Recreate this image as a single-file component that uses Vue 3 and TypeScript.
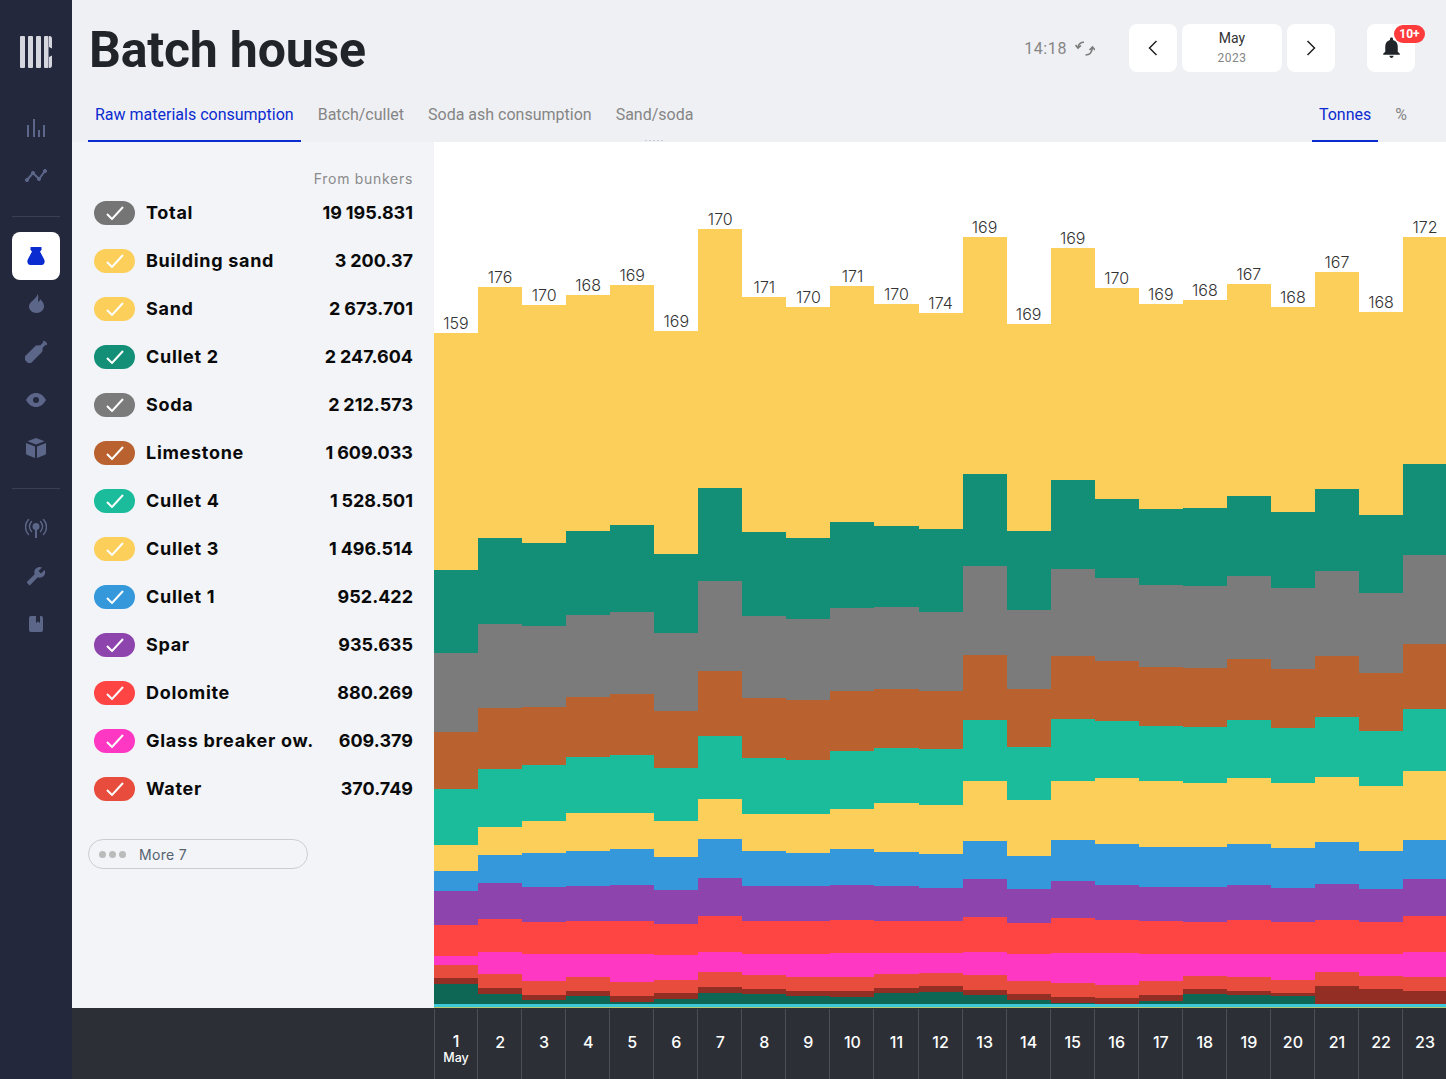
<script setup lang="ts">
interface Band { color: string; tops: number[] }
const bands: Band[] = [
  { color: '#fcce5a', tops: [333,287,305,295,285,331,229,297,307,286,304,313,237,324,248,288,304,300,284,307,272,312,237] },
  { color: '#148f77', tops: [570,538,543,531,525,554,488,532,538,522,526,529,474,531,480,499,509,508,496,512,489,515,464] },
  { color: '#7b7b7b', tops: [653,624,626,615,612,633,581,616,619,608,607,612,566,610,569,578,585,586,576,588,571,593,555] },
  { color: '#ba6130', tops: [732,708,707,697,694,711,671,698,700,691,689,691,655,689,656,661,667,668,659,669,656,673,644] },
  { color: '#1abc9c', tops: [789,769,765,757,755,768,736,758,760,751,748,749,720,747,719,721,726,727,720,728,717,731,709] },
  { color: '#fcce5a', tops: [845,827,821,813,813,821,799,814,814,809,803,805,781,800,781,778,781,783,778,783,777,786,771] },
  { color: '#3498db', tops: [871,855,853,851,849,857,839,851,853,849,852,854,841,856,840,844,847,847,844,848,842,851,840] },
  { color: '#8e44ad', tops: [891,883,887,886,885,890,878,886,886,885,886,888,879,889,881,885,887,887,885,888,884,889,879] },
  { color: '#ff4444', tops: [925,919,922,921,921,924,916,921,921,920,921,921,917,923,918,920,921,922,920,922,920,922,916] },
  { color: '#ff38c4', tops: [956,952,954,954,954,955,952,954,954,953,953,953,952,954,953,953,954,954,954,954,954,954,952] },
  { color: '#e74c3c', tops: [965,974,981,977,982,980,972,975,977,977,974,973,975,981,983,985,981,976,977,980,972,976,977] },
  { color: '#922e24', tops: [978,988,995,991,996,993,987,989,991,991,988,986,990,994,997,998,995,989,991,993,986,989,991] },
  { color: '#0e6655', tops: [984,994,1000,996,1002,999,993,994,996,997,993,992,995,1000,1003,1004,1001,994,995,996,1004,1004,1004] },
  { color: '#3cc8d8', tops: Array(23).fill(1004) },
  { color: '#b5c96a', tops: Array(23).fill(1007) },
]
const totals = [159,176,170,168,169,169,170,171,170,171,170,174,169,169,169,170,169,168,167,168,167,168,172]

const columns = totals.map((total, i) => ({
  total,
  day: i + 1,
  segments: bands.map((b, k) => ({
    color: b.color,
    height: (k + 1 < bands.length ? bands[k + 1].tops[i] : 1008) - b.tops[i],
  })),
}))

const rows = [
  { name: 'Total', value: '19 195.831', color: '#757575' },
  { name: 'Building sand', value: '3 200.37', color: '#fcce5a' },
  { name: 'Sand', value: '2 673.701', color: '#fcce5a' },
  { name: 'Cullet 2', value: '2 247.604', color: '#148f77' },
  { name: 'Soda', value: '2 212.573', color: '#7b7b7b' },
  { name: 'Limestone', value: '1 609.033', color: '#ba6130' },
  { name: 'Cullet 4', value: '1 528.501', color: '#1abc9c' },
  { name: 'Cullet 3', value: '1 496.514', color: '#fcce5a' },
  { name: 'Cullet 1', value: '952.422', color: '#3498db' },
  { name: 'Spar', value: '935.635', color: '#8e44ad' },
  { name: 'Dolomite', value: '880.269', color: '#ff4444' },
  { name: 'Glass breaker ow.', value: '609.379', color: '#ff38c4' },
  { name: 'Water', value: '370.749', color: '#e74c3c' },
]
const tabs = ['Raw materials consumption', 'Batch/cullet', 'Soda ash consumption', 'Sand/soda']
</script>

<template>
  <div class="app">
    <aside class="side">
      <svg class="logo" width="32" height="32" viewBox="0 0 32 32" fill="#d6d6de">
        <rect x="0" y="0" width="5" height="32" rx="1" />
        <rect x="8" y="0" width="5" height="32" rx="1" />
        <rect x="16" y="0" width="5" height="32" rx="1" />
        <rect x="24" y="0" width="4.500" height="32" rx="1" />
        <path d="M29 0h.500q2.500 0 2.500 3v9.500l-3-1.500zM29 21l3-1.500V29q0 3-2.500 3H29z" />
      </svg>
      <div class="nav first">
        <div class="nav-item">
          <svg width="20" height="18" viewBox="0 0 20 18" fill="#5c6689">
            <rect x="1" y="6" width="2" height="12" /><rect x="7" y="0" width="2" height="18" />
            <rect x="12" y="11" width="2" height="7" /><rect x="17" y="6" width="2" height="12" />
          </svg>
        </div>
        <div class="nav-item">
          <svg width="22" height="14" viewBox="0 0 22 14" fill="#5c6689" stroke="#5c6689">
            <path d="M2 11L8 4l6 6 6-8" fill="none" stroke-width="2" />
            <circle cx="2" cy="11" r="1.600" /><circle cx="8" cy="4" r="1.600" /><circle cx="14" cy="10" r="1.600" /><circle cx="20" cy="2" r="1.600" />
          </svg>
        </div>
      </div>
      <div class="rule"></div>
      <div class="nav">
        <div class="nav-item active">
          <svg width="18" height="18" viewBox="0 0 18 18" fill="#0a2bd0">
            <path d="M3.500 0h11v3l-1.500 1.500 4.200 8c1.200 2.500 0 5.500-2.700 5.500H3.500C.8 18-.4 15 .8 12.500l4.200-8L3.500 3z" />
          </svg>
        </div>
        <div class="nav-item">
          <svg class="flame" width="15" height="19" viewBox="0 0 15 19" fill="#5c6689">
            <path d="M8.500 0c1.500 3 .5 5 .5 6.500 0 1 1 1.500 1.500.5l.5-2c3 2.500 4 5 4 7.500 0 3.500-3.300 6.500-7.500 6.500S0 16 0 12.500C0 7.500 7.500 5.500 8.500 0z" />
          </svg>
        </div>
        <div class="nav-item">
          <svg width="22" height="22" viewBox="-11 -11 22 22" fill="#5c6689">
            <g transform="rotate(45)">
              <rect x="-2.600" y="-14" width="5.200" height="2.200" rx=".6" />
              <path d="M-1.700-12h3.400v4l2.600 3.500V12q0 1.500-1.500 1.500h-6q-1.500 0-1.500-1.500V-4.500L-1.700-8z" />
            </g>
          </svg>
        </div>
        <div class="nav-item">
          <svg width="20" height="14" viewBox="0 0 20 14" fill="#5c6689">
            <path fill-rule="evenodd" d="M0 7C2.500 2.500 6 0 10 0s7.500 2.500 10 7c-2.500 4.500-6 7-10 7S2.500 11.500 0 7zm10-3a3 3 0 1 0 0 6 3 3 0 0 0 0-6z" />
          </svg>
        </div>
        <div class="nav-item">
          <svg width="20" height="20" viewBox="0 0 20 20" fill="#5c6689">
            <path d="M10 0l8.500 3.200L10 6.600 1.500 3.200z" /><path d="M0 5l9 3.600V20l-7.500-3c-1-.4-1.500-1-1.500-2z" /><path d="M20 5l-9 3.600V20l7.500-3c1-.4 1.500-1 1.500-2z" />
          </svg>
        </div>
      </div>
      <div class="rule second"></div>
      <div class="nav">
        <div class="nav-item">
          <svg width="22" height="19" viewBox="0 0 22 19" fill="none" stroke="#5c6689" stroke-width="1.400" stroke-linecap="round">
            <circle cx="11" cy="7.500" r="3.500" fill="#5c6689" stroke="none" />
            <rect x="10" y="9" width="2" height="10" fill="#5c6689" stroke="none" />
            <path d="M6.500 2.500c-2.500 3-2.500 7 0 10M15.500 2.500c2.500 3 2.500 7 0 10M3.500 .5c-4 4.500-4 10.500 0 15M18.500 .5c4 4.500 4 10.500 0 15" />
          </svg>
        </div>
        <div class="nav-item">
          <svg width="20" height="20" viewBox="0 0 24 24" fill="#5c6689">
            <path transform="matrix(-1 0 0 1 24 0)" d="M22.700 19l-9.100-9.100c.9-2.300.4-5-1.500-6.900-2-2-5-2.400-7.400-1.300L9 6 6 9 1.600 4.700C.4 7.100.9 10.100 2.900 12.100c1.900 1.900 4.600 2.400 6.900 1.500l9.100 9.100c.4.4 1 .4 1.400 0l2.300-2.300c.5-.4.5-1.100.1-1.400z" />
          </svg>
        </div>
        <div class="nav-item">
          <svg width="14" height="16" viewBox="0 0 14 16" fill="#5c6689">
            <path d="M2 0h5v7l2-1.500L11 7V0h1q2 0 2 2v12q0 2-2 2H2q-2 0-2-2V2q0-2 2-2z" />
          </svg>
        </div>
      </div>
    </aside>

    <main class="main">
      <header class="head">
        <div class="top">
          <h1 class="title">Batch house</h1>
          <div class="tools">
            <span class="time">14:18</span>
            <svg class="sync" width="20" height="15" viewBox="0 0 20 15" fill="none" stroke="#7d7d7d" stroke-width="1.600">
              <path d="M3 6.500C3.500 3 6 1.200 9 1.200M.5 4L3 7l3-2.500" />
              <path d="M10.500 14c3.500 0 6.500-2.500 7-7.500M14.500 9l3-3 2.500 3" />
            </svg>
            <div class="btn">
              <svg width="10" height="16" viewBox="0 0 10 16" fill="none" stroke="#222" stroke-width="1.500"><path d="M8.500 1L1.500 8l7 7" /></svg>
            </div>
            <div class="btn date"><span class="month">May</span><span class="year">2023</span></div>
            <div class="btn">
              <svg width="10" height="16" viewBox="0 0 10 16" fill="none" stroke="#222" stroke-width="1.500"><path d="M1.500 1l7 7-7 7" /></svg>
            </div>
            <div class="btn bell">
              <svg class="bell-icon" width="25" height="25" viewBox="0 0 24 24" fill="#212529">
                <path d="M12 22c1.100 0 2-.9 2-2h-4c0 1.100.9 2 2 2zm6-6v-5c0-3.070-1.630-5.640-4.500-6.320V4c0-.83-.67-1.500-1.500-1.500s-1.500.67-1.500 1.500v.68C7.640 5.360 6 7.920 6 11v5l-2 2v1h16v-1l-2-2z" />
              </svg>
              <span class="badge">10+</span>
            </div>
          </div>
        </div>
        <nav class="tabs">
          <div class="tab-group">
            <a v-for="(t, i) in tabs" :key="t" class="tab" :class="{ on: i === 0 }">{{ t }}</a>
          </div>
          <div class="tab-group units">
            <a class="tab on">Tonnes</a>
            <a class="tab">%</a>
          </div>
        </nav>
        <span class="grip"></span>
      </header>

      <section class="body">
        <div class="list">
          <div class="list-head">From bunkers</div>
          <div v-for="r in rows" :key="r.name" class="row">
            <span class="toggle" :style="{ background: r.color }">
              <svg width="18" height="14" viewBox="0 0 18 14" fill="none" stroke="#fff" stroke-width="2"><path d="M1 8l5 5L17 1" /></svg>
            </span>
            <span class="name">{{ r.name }}</span>
            <span class="value">{{ r.value }}</span>
          </div>
          <div class="more">
            <span class="dots"><i></i><i></i><i></i></span>
            <span>More 7</span>
          </div>
        </div>
        <div class="chart">
          <div v-for="c in columns" :key="c.day" class="col">
            <span class="total">{{ c.total }}</span>
            <span v-for="(s, k) in c.segments" :key="k" class="seg" :style="{ height: s.height + 'px', background: s.color }"></span>
          </div>
        </div>
      </section>

      <footer class="foot">
        <div class="foot-left"></div>
        <div v-for="c in columns" :key="c.day" class="day">
          <b>{{ c.day }}</b>
          <small v-if="c.day === 1">May</small>
        </div>
      </footer>
    </main>
  </div>
</template>

<style>
html, body { margin: 0; overflow: hidden; }
</style>

<style scoped>
.app { display: flex; width: 1446px; height: 1079px; overflow: hidden; font-family: "Inter", sans-serif; }
.side { flex: 0 0 72px; background: #23283d; display: flex; flex-direction: column; align-items: center; padding-top: 36px; box-sizing: border-box; }
.logo { display: block; margin-bottom: 36px; }
.nav { display: flex; flex-direction: column; width: 48px; }
.nav-item { height: 48px; display: flex; align-items: center; justify-content: center; border-radius: 8px; }
.nav-item.active { background: #fff; }
.flame { margin-bottom: 2px; }
.rule { width: 48px; height: 1px; background: #3b3f55; margin: 16px 0 15px; }
.rule.second { margin: 16px 0 15px; }

.main { width: 1374px; display: flex; flex-direction: column; overflow: hidden; }
.head { height: 142px; flex: none; background: #eff0f4; position: relative; box-sizing: border-box; padding: 24px 16px 0; }
.top { height: 48px; display: flex; align-items: center; justify-content: space-between; padding-left: 1px; }
.title { margin: 4px 0 0; font: 700 50px/48px "Roboto", sans-serif; color: #212529; letter-spacing: -.2px; }
.tools { display: flex; align-items: center; margin-right: 15px; }
.time { font: 400 16px "Roboto", sans-serif; color: #858585; letter-spacing: .6px; margin-right: 8px; }
.sync { margin-right: 34px; }
.btn { width: 48px; height: 48px; background: #fff; border-radius: 8px; display: flex; align-items: center; justify-content: center; position: relative; }
.btn + .btn { margin-left: 5px; }
.date { width: 100px; flex-direction: column; gap: 4px; box-sizing: border-box; padding-bottom: 3px; }
.month { font: 400 14px/18px "Roboto", sans-serif; color: #333; }
.year { font: 400 12px/14px "Roboto", sans-serif; color: #858585; letter-spacing: .5px; }
.btn.bell { margin-left: 32px; }
.bell-icon { margin-bottom: 2px; }
.badge { position: absolute; left: 27px; top: 1px; width: 31px; height: 18px; background: #ff3b3b; border-radius: 9px; color: #fff; font: 700 12px/18px "Roboto", sans-serif; text-align: center; }
.tabs { display: flex; justify-content: space-between; margin-top: 16px; height: 54px; }
.tab-group { display: flex; gap: 10px; height: 38px; }
.tab { height: 38px; box-sizing: border-box; padding: 1px 7px 0; margin-top: 16px; font: 400 16px/20px "Roboto", sans-serif; color: #858585; display: block; border-bottom: 2px solid transparent; }
.tab.on { color: #0a2bd0; border-bottom-color: #0a2bd0; }
.units { margin-right: 16px; gap: 10px; }
.grip { position: absolute; left: 573px; top: 140px; width: 20px; height: 1px; background: repeating-linear-gradient(90deg, #c9ccd6 0 2px, transparent 2px 4px); }

.body { flex: 1; min-height: 0; display: flex; }
.list { flex: 0 0 362px; box-sizing: border-box; background: #f2f4f8; padding: 28px 21px 0 16px; }
.list-head { font-size: 14px; line-height: 18px; letter-spacing: .7px; color: #8a8a8a; text-align: right; margin-bottom: 1px; }
.row { height: 48px; display: flex; align-items: center; padding-left: 6px; font-size: 18px; font-weight: 700; color: #0a0a0a; }
.toggle { width: 41px; height: 24px; border-radius: 12px; display: flex; align-items: center; justify-content: center; margin-right: 11px; flex: none; }
.name { flex: 1; white-space: nowrap; letter-spacing: .7px; padding-bottom: 2px; }
.value { white-space: nowrap; padding-bottom: 2px; word-spacing: -.4px; }
.more { margin-top: 26px; width: 220px; height: 30px; box-sizing: border-box; border: 1px solid #cccdd2; border-radius: 15px; display: flex; align-items: center; padding-left: 10px; font-size: 14px; letter-spacing: .3px; color: #566270; }
.dots { display: flex; gap: 3px; margin-right: 13px; }
.dots i { width: 7px; height: 7px; border-radius: 50%; background: #bbb; display: block; }

.chart { flex: 1; min-width: 0; display: flex; background: #fff; overflow: hidden; }
.col { flex: 0 0 44.05px; display: flex; flex-direction: column; justify-content: flex-end; }
.total { font-size: 16px; font-weight: 300; line-height: 20px; height: 20px; text-align: center; color: #333; }
.seg { display: block; flex: none; }

.foot { flex: 0 0 71px; display: flex; background: #2c2f36; overflow: hidden; }
.foot-left { flex: 0 0 362px; }
.day { flex: 0 0 44.05px; box-sizing: border-box; margin-top: 1px; border-left: 1px solid #4c4e53; color: #fff; text-align: center; padding: 24px 0 0 1px; }
.foot-left + .day { flex-basis: 43.05px; padding: 23px 0 0; }
.day b { display: block; font-size: 16px; font-weight: 500; line-height: 18px; }
.day small { display: block; font-size: 12.5px; font-weight: 500; line-height: 12px; margin-top: 2px; }
</style>
